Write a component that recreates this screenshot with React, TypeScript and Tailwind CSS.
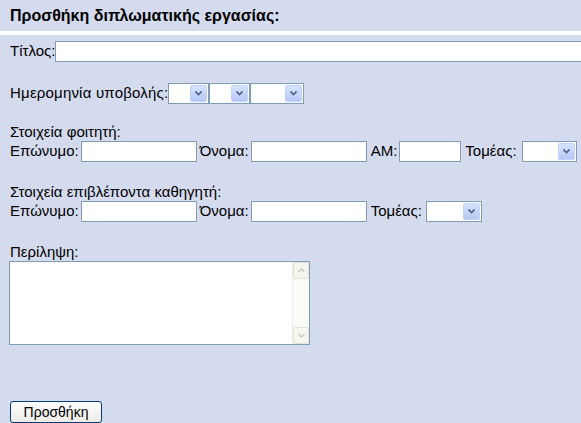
import React from 'react';

const inputCls = 'h-[21px] border border-[#7f9db9] bg-white outline-none shrink-0';

function Select({ width }: { width: string }) {
  return (
    <div className={`${width} h-[21px] border border-[#7f9db9] bg-white flex justify-end items-stretch p-[1px] shrink-0`}>
      <div className="w-[17px] rounded-[2px] bg-gradient-to-b from-[#d6e2fd] to-[#b5c9f7] border border-[#c3d3fd] flex items-center justify-center">
        <svg width="7" height="5" viewBox="0 0 7 5">
          <path d="M0.5 0.5 L3.5 3.5 L6.5 0.5" fill="none" stroke="#4d6185" strokeWidth="1.6" />
        </svg>
      </div>
    </div>
  );
}

export default function App() {
  return (
    <div className="w-[581px] h-[423px] overflow-hidden bg-white text-black text-[15px] font-['Liberation_Sans',Arial,sans-serif]">
      <div className="h-[31px] bg-[#d5dbef] px-[10px] flex items-center font-bold text-[16px]">
        Προσθήκη διπλωματικής εργασίας:
      </div>
      <div className="mt-[4px] h-[388px] bg-[#d5dbef] pl-[10px] pt-[6px] flex flex-col">
        <div className="flex items-center h-[21px]">
          <span>Τίτλος:</span>
          <input className={`${inputCls} w-[540px]`} />
        </div>

        <div className="flex items-center h-[21px] mt-[21px]">
          <span className="tracking-[0.2px]">Ημερομηνία υποβολής:</span>
          <Select width="w-[41px]" />
          <Select width="w-[41px]" />
          <Select width="w-[54px]" />
        </div>

        <div className="mt-[19px] leading-[18px]">Στοιχεία φοιτητή:</div>
        <div className="flex items-center h-[21px]">
          <span>Επώνυμο:</span>
          <input className={`${inputCls} w-[116px] ml-[2px]`} />
          <span className="ml-[3px]">Όνομα:</span>
          <input className={`${inputCls} w-[116px] ml-[2px]`} />
          <span className="ml-[4px]">AM:</span>
          <input className={`${inputCls} w-[62px] ml-[2px]`} />
          <span className="ml-[4px]">Τομέας:</span>
          <div className="ml-[5px]">
            <Select width="w-[55px]" />
          </div>
        </div>

        <div className="mt-[21px] leading-[18px]">Στοιχεία επιβλέποντα καθηγητή:</div>
        <div className="flex items-center h-[21px]">
          <span>Επώνυμο:</span>
          <input className={`${inputCls} w-[116px] ml-[2px]`} />
          <span className="ml-[3px]">Όνομα:</span>
          <input className={`${inputCls} w-[116px] ml-[2px]`} />
          <span className="ml-[4px]">Τομέας:</span>
          <div className="ml-[4px]">
            <Select width="w-[56px]" />
          </div>
        </div>

        <div className="mt-[21px] leading-[18px]">Περίληψη:</div>
        <div className="w-[301px] h-[84px] -ml-[1px] border border-[#7f9db9] bg-white flex justify-end">
          <div className="w-[17px] bg-[#fbfbf8] border-l border-[#eeede5] flex flex-col justify-between">
            <div className="h-[17px] bg-[#f6f5ef] border border-[#e4e2d8] rounded-[2px] flex items-center justify-center">
              <svg width="7" height="5" viewBox="0 0 7 5">
                <path d="M0.5 4 L3.5 1 L6.5 4" fill="none" stroke="#c8c7c0" strokeWidth="1.4" />
              </svg>
            </div>
            <div className="h-[17px] bg-[#f6f5ef] border border-[#e4e2d8] rounded-[2px] flex items-center justify-center">
              <svg width="7" height="5" viewBox="0 0 7 5">
                <path d="M0.5 1 L3.5 4 L6.5 1" fill="none" stroke="#c8c7c0" strokeWidth="1.4" />
              </svg>
            </div>
          </div>
        </div>

        <div className="mt-auto">
          <button className="w-[92px] h-[22px] rounded-[3px] border border-[#003c74] bg-gradient-to-b from-white to-[#ecebe6] text-[14px] flex items-center justify-center">
            Προσθήκη
          </button>
        </div>
      </div>
    </div>
  );
}
